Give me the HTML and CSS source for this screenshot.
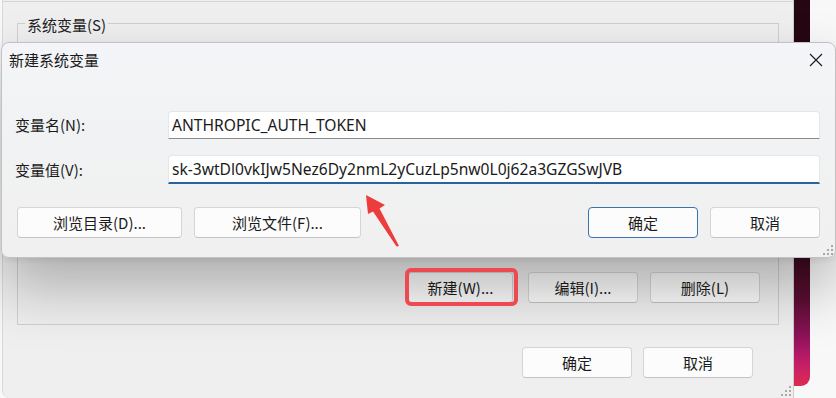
FILE: index.html
```html
<!DOCTYPE html>
<html lang="zh-CN">
<head>
<meta charset="utf-8">
<title>新建系统变量</title>
<link rel="stylesheet" href="styles.css">
</head>
<body>
<div class="desk">
  <div class="wall"></div>

  <div class="parent">
    <div class="topline"></div>
    <fieldset class="group">
      <legend class="legend">系统变量(S)</legend>
      <div class="group-inner">
        <button class="btn gbtn first">新建(W)...</button>
        <button class="btn gbtn">编辑(I)...</button>
        <button class="btn gbtn">删除(L)</button>
      </div>
    </fieldset>
    <div class="parent-foot">
      <button class="btn pbtn">确定</button>
      <button class="btn pbtn">取消</button>
    </div>
    <svg class="grip" width="12" height="12" viewBox="0 0 12 12"><rect x="9" y="1" width="2" height="2"/><rect x="5" y="5" width="2" height="2"/><rect x="9" y="5" width="2" height="2"/><rect x="1" y="9" width="2" height="2"/><rect x="5" y="9" width="2" height="2"/><rect x="9" y="9" width="2" height="2"/></svg>
  </div>

  <div class="dialog">
    <div class="titlebar">
      <span class="title">新建系统变量</span>
      <span class="close"><svg width="14" height="14" viewBox="0 0 14 14"><path d="M1 1 L13 13 M13 1 L1 13" stroke="#1a1a1a" stroke-width="1.1" fill="none"/></svg></span>
    </div>
    <div class="dlg-body">
      <div class="field f1">
        <span class="lbl">变量名(N):</span>
        <div class="input">ANTHROPIC_AUTH_TOKEN</div>
      </div>
      <div class="field f2">
        <span class="lbl">变量值(V):</span>
        <div class="input focus">sk-3wtDl0vkIJw5Nez6Dy2nmL2yCuzLp5nw0L0j62a3GZGSwJVB</div>
      </div>
      <div class="dlg-btns">
        <button class="btn w165">浏览目录(D)...</button>
        <button class="btn w167">浏览文件(F)...</button>
        <span class="spacer"></span>
        <button class="btn w110 default">确定</button>
        <button class="btn w110">取消</button>
      </div>
    </div>
    <svg class="grip" width="12" height="12" viewBox="0 0 12 12"><rect x="9" y="1" width="2" height="2"/><rect x="5" y="5" width="2" height="2"/><rect x="9" y="5" width="2" height="2"/><rect x="1" y="9" width="2" height="2"/><rect x="5" y="9" width="2" height="2"/><rect x="9" y="9" width="2" height="2"/></svg>
  </div>

  <div class="mark"></div>
  <svg class="arrow" width="836" height="398" viewBox="0 0 836 398">
    <polygon points="366,195 385,205 379.5,208.5 399,246 396.5,246.5 373,211.5 368,214" fill="#ee3b3b"/>
  </svg>
</div>
</body>
</html>
```

FILE: styles.css
```css
* { box-sizing: border-box; }
html, body { margin: 0; padding: 0; }
body {
  width: 836px;
  height: 398px;
  overflow: hidden;
  background: #f8f8f8;
  font-family: "Noto Sans CJK SC", "Noto Sans", sans-serif;
  font-size: 15px;
  color: #1b1b1b;
}
.desk {
  position: relative;
  width: 836px;
  height: 398px;
  overflow: hidden;
}

/* wallpaper strip of the window behind */
.wall {
  position: absolute;
  left: 780px;
  top: 0;
  width: 30px;
  height: 386px;
  border-bottom-right-radius: 9px;
  background: linear-gradient(to bottom,
    #250612 0%, #2c0816 55%, #3c0a1f 67%, #5c0e33 78%,
    #8c1359 87%, #c21d6a 94%, #dc2c52 100%);
}

/* parent window: 环境变量 */
.parent {
  position: absolute;
  left: 2px;
  top: -10px;
  width: 792px;
  height: 408px;
  background: #efefef;
  border-left: 1px solid #d9d9d9;
  border-right: 1px solid #cdcdcd;
  border-bottom-left-radius: 8px;
  display: flex;
  flex-direction: column;
}
.topline {
  margin-top: 11px;
  height: 1px;
  background: #d4d4d4;
}
.group {
  margin: 11px 0 0 14px;
  padding: 0;
  width: 762px;
  border: 1px solid #cfcfcf;
  border-radius: 0;
  min-width: 0;
}
.legend {
  margin-left: 7px;
  padding: 4px 2px 0;
  line-height: 16px;
  font-size: 15px;
  color: #222;
}
.group-inner {
  height: 291px;
  display: flex;
  justify-content: flex-end;
  align-items: flex-end;
  gap: 12px;
  padding: 0 18px 21px 0;
}
.parent-foot {
  margin-top: 22px;
  display: flex;
  justify-content: flex-end;
  gap: 11px;
  padding-right: 40px;
}

/* buttons */
.btn {
  height: 31px;
  padding: 0;
  background: #fcfcfc;
  border: 1px solid #d5d5d5;
  border-bottom-color: #c3c3c3;
  border-radius: 4px;
  font-family: "Noto Sans CJK SC", "Noto Sans", sans-serif;
  font-size: 15px;
  color: #1b1b1b;
  line-height: 20px;
}
.gbtn { width: 110px; }
.gbtn.first {
  width: 105px;
  margin-right: 3px;
}
.pbtn { width: 110px; }
.w165 { width: 165px; }
.w167 { width: 167px; }
.w110 { width: 110px; }
.btn.default { border: 1px solid #3a73ae; }

.grip {
  position: absolute;
  right: 1px;
  bottom: 1px;
  fill: #a8a8a8;
}

/* dialog: 新建系统变量 */
.dialog {
  position: absolute;
  left: 1px;
  top: 42px;
  width: 835px;
  height: 216px;
  border: 1px solid #c2c2c2;
  border-radius: 8px;
  background: linear-gradient(to bottom, #f4f5f8 0%, #f1f2f3 40%, #f0f0f0 100%);
  box-shadow: 0 30px 60px rgba(0, 0, 0, 0.28), 0 2px 6px rgba(0, 0, 0, 0.08);
}
.titlebar {
  height: 34px;
  display: flex;
  align-items: center;
  justify-content: space-between;
  padding-left: 7px;
}
.title {
  font-size: 15px;
  line-height: 20px;
  color: #1a1a1a;
}
.close {
  width: 38px;
  height: 34px;
  display: flex;
  align-items: center;
  justify-content: center;
}
.dlg-body {
  padding: 34px 15px 18px 13px;
}
.field {
  display: flex;
  align-items: center;
}
.f1 { height: 28px; }
.f2 { height: 29px; margin-top: 16px; }
.lbl {
  width: 153px;
  flex: none;
  font-size: 15px;
  line-height: 20px;
  color: #1b1b1b;
}
.input {
  flex: 1;
  height: 100%;
  display: flex;
  align-items: center;
  padding-left: 3px;
  background: #ffffff;
  border: 1px solid #e6e6e6;
  border-bottom: 1px solid #8a8a8a;
  border-radius: 4px 4px 0 0;
  font-family: "Noto Sans", "Open Sans", sans-serif;
  font-size: 15.6px;
  color: #1a1a1a;
  white-space: nowrap;
}
.input.focus { border-bottom: 2px solid #2a64a0; }
.dlg-btns {
  margin-top: 23px;
  padding-left: 2px;
  display: flex;
  gap: 12px;
}
.spacer { flex: 1; }

/* annotation overlays */
.mark {
  position: absolute;
  left: 405px;
  top: 268px;
  width: 113px;
  height: 38px;
  border: 4px solid #ec4a50;
  border-radius: 6px;
  pointer-events: none;
}
.arrow {
  position: absolute;
  left: 0;
  top: 0;
  pointer-events: none;
}
```
